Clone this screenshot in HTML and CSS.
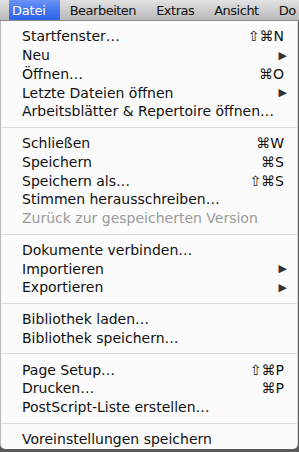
FILE: index.html
```html
<!DOCTYPE html>
<html>
<head>
<meta charset="utf-8">
<link rel="stylesheet" href="styles.css">
</head>
<body>
<div class="menubar">
  <span class="mb-item active">Datei</span>
  <span class="mb-item">Bearbeiten</span>
  <span class="mb-item">Extras</span>
  <span class="mb-item">Ansicht</span>
  <span class="mb-item">Do</span>
</div>
<div class="menu">
  <div class="group">
    <div class="row"><span>Startfenster…</span><span class="key">⇧⌘N</span></div>
    <div class="row"><span>Neu</span><span class="arrow">▶</span></div>
    <div class="row"><span>Öffnen…</span><span class="key">⌘O</span></div>
    <div class="row"><span>Letzte Dateien öffnen</span><span class="arrow">▶</span></div>
    <div class="row"><span>Arbeitsblätter &amp; Repertoire öffnen…</span></div>
  </div>
  <div class="group">
    <div class="row"><span>Schließen</span><span class="key">⌘W</span></div>
    <div class="row"><span>Speichern</span><span class="key">⌘S</span></div>
    <div class="row"><span>Speichern als…</span><span class="key">⇧⌘S</span></div>
    <div class="row"><span>Stimmen herausschreiben…</span></div>
    <div class="row disabled"><span>Zurück zur gespeicherten Version</span></div>
  </div>
  <div class="group">
    <div class="row"><span>Dokumente verbinden…</span></div>
    <div class="row"><span>Importieren</span><span class="arrow">▶</span></div>
    <div class="row"><span>Exportieren</span><span class="arrow">▶</span></div>
  </div>
  <div class="group">
    <div class="row"><span>Bibliothek laden…</span></div>
    <div class="row"><span>Bibliothek speichern…</span></div>
  </div>
  <div class="group">
    <div class="row"><span>Page Setup…</span><span class="key">⇧⌘P</span></div>
    <div class="row"><span>Drucken…</span><span class="key">⌘P</span></div>
    <div class="row"><span>PostScript-Liste erstellen…</span></div>
  </div>
  <div class="group">
    <div class="row"><span>Voreinstellungen speichern</span></div>
  </div>
</div>
</body>
</html>
```
FILE: styles.css
```css
html, body {
  margin: 0;
  padding: 0;
  background: #5a5a5a;
  width: 299px;
  height: 452px;
  overflow: hidden;
  font-family: "DejaVu Sans", "Liberation Sans", sans-serif;
}
.menubar {
  height: 21px;
  display: flex;
  align-items: stretch;
  background: linear-gradient(#e2e2e2, #cdcdcd 50%, #b9b9b9);
  border-bottom: 1px solid #8a8a8a;
  box-sizing: border-box;
  white-space: nowrap;
  overflow: hidden;
}
.mb-item {
  font-size: 13px;
  letter-spacing: -0.5px;
  color: #111;
  padding: 0 10px;
  line-height: 21px;
  flex-shrink: 0;
}
.mb-item.active {
  color: #fff;
  background: linear-gradient(#6d94f6, #4477f0 50%, #2f63ea);
  margin-left: 9px;
  padding: 0 14px 0 3px;
  letter-spacing: -0.2px;
}
.menu {
  background: #fbfbfb;
  border-left: 1px solid #b9b9b9;
  border-right: 1px solid #d8d8d8;
  border-radius: 0 0 5px 5px;
  width: 298px;
  height: 428px;
  box-sizing: border-box;
  padding-top: 6px;
  font-size: 14px;
  color: #111;
}
.group {
  border-bottom: 1px solid #dcdcdc;
  padding-bottom: 6px;
  margin-bottom: 6px;
}
.group:last-child {
  border-bottom: none;
}
.row {
  display: flex;
  justify-content: space-between;
  align-items: center;
  height: 18.75px;
  padding: 0 13px 0 21px;
}
.disabled { color: #9a9a9a; }
.key { font-size: 14px; }
.arrow { font-size: 11px; color: #333; margin-right: -3px; }
```
